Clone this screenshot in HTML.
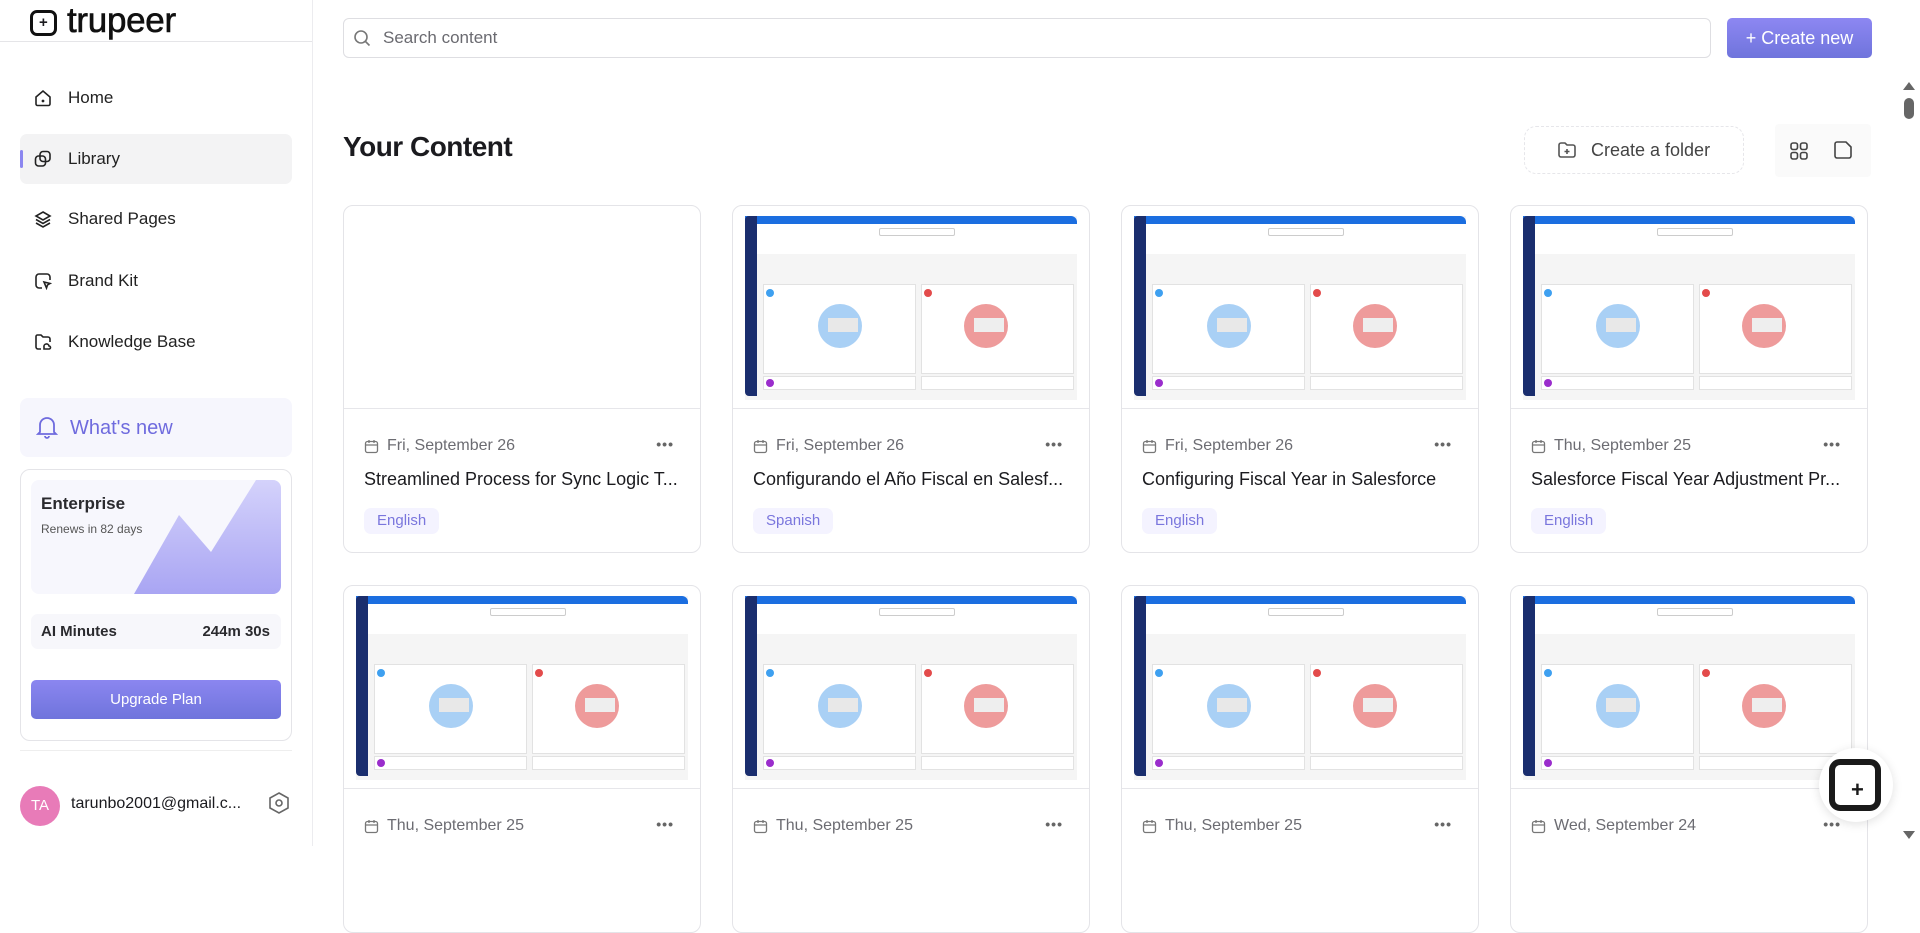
<!DOCTYPE html>
<html><head><meta charset="utf-8">
<style>
*{box-sizing:border-box;margin:0;padding:0}
body{width:1920px;height:846px;overflow:hidden;background:#fff;font-family:"Liberation Sans",sans-serif;color:#1b1b1f;position:relative}
.a{position:absolute}
.side{left:0;top:0;width:313px;height:846px;border-right:1px solid #ececef;background:#fff}
.nav{position:absolute;left:20px;width:272px;height:50px;display:flex;align-items:center;font-size:17px;color:#222}
.nav svg{margin-left:14px;margin-right:16px}
.card{position:absolute;width:358px;height:348px;border:1.5px solid #e4e4e8;border-radius:10px;overflow:hidden;background:#fff}
.thumb{position:absolute;left:0;top:0;right:0;height:203px;border-bottom:1.5px solid #e6e6ea}
.date{position:absolute;left:20px;top:231px;font-size:16px;color:#6c6c72;display:flex;align-items:center;gap:8px}
.dots{position:absolute;right:26px;top:230px;font-size:14px;color:#666;letter-spacing:1px;font-weight:bold}
.title{position:absolute;left:20px;top:263px;font-size:18px;color:#1b1b1f;white-space:nowrap}
.tag{position:absolute;left:20px;top:302px;height:26px;padding:0 13px;border-radius:7px;background:#f4f3ff;color:#7a76dd;font-size:15px;line-height:26px}
.sf{position:absolute;left:12px;top:10px;right:12px;bottom:8px;background:#f5f5f5;overflow:hidden}
.sf .top{position:absolute;left:0;right:0;top:0;height:8px;background:#1b6ee0;border-radius:0 6px 0 0}
.sf .left{position:absolute;left:0;top:0;bottom:4px;width:12px;background:#1a2e6e;border-radius:4px 0 0 4px}
.sf .hdr{position:absolute;left:12px;right:0;top:8px;height:30px;background:#fff}
.sf .srch{position:absolute;left:38%;top:4px;width:24%;height:8px;border:1px solid #ccc;border-radius:2px}
.sf .p{position:absolute;background:#fff;border:1px solid #e2e2e2}
.sf .c{position:absolute;border-radius:50%}
.sf .bar{position:absolute;background:#ddd}
</style></head><body>

<div class="a side">
  <div class="a" style="left:30px;top:10px;width:27px;height:26px;border:3.5px solid #111;border-radius:7px"></div>
  <div class="a" style="left:39px;top:14px;font-size:15px;font-weight:bold">+</div>
  <div class="a" style="left:67px;top:1px;font-size:35px;color:#111;letter-spacing:-0.3px;-webkit-text-stroke:0.6px #111">trupeer</div>
  <div class="a" style="left:0;top:41px;width:312px;height:1px;background:#e5e5e8"></div>

  <div class="nav" style="top:73px"><svg width="18" height="18" viewBox="0 0 18 18" fill="none" stroke="#222" stroke-width="1.6"><path d="M2 8L9 2l7 6v7a1.5 1.5 0 0 1-1.5 1.5h-11A1.5 1.5 0 0 1 2 15z"/><circle cx="9" cy="12" r=".6" fill="#222"/></svg>Home</div>
  <div class="nav" style="top:134px;background:#f3f3f4;border-radius:7px"><div class="a" style="left:0;top:16px;width:3px;height:18px;background:#8b86f0;border-radius:2px"></div><svg width="18" height="18" viewBox="0 0 18 18" fill="none" stroke="#222" stroke-width="1.6"><rect x="1.5" y="6" width="10" height="10" rx="3"/><rect x="6" y="1.5" width="10" height="10" rx="3"/></svg>Library</div>
  <div class="nav" style="top:194px"><svg width="18" height="18" viewBox="0 0 18 18" fill="none" stroke="#222" stroke-width="1.6"><path d="M9 2l7 4-7 4-7-4z"/><path d="M2 9.5l7 4 7-4"/><path d="M2 13l7 4 7-4"/></svg>Shared Pages</div>
  <div class="nav" style="top:256px"><svg width="18" height="18" viewBox="0 0 18 18" fill="none" stroke="#222" stroke-width="1.6"><path d="M8 16H5a3 3 0 0 1-3-3V5a3 3 0 0 1 3-3h8a3 3 0 0 1 3 3v3"/><path d="M10 10l6 1.5-2.5 1.5-1 3z"/></svg>Brand Kit</div>
  <div class="nav" style="top:317px"><svg width="18" height="18" viewBox="0 0 18 18" fill="none" stroke="#222" stroke-width="1.6"><path d="M7 16H4a2 2 0 0 1-2-2V3.5A1.5 1.5 0 0 1 3.5 2H7l2 2h5a2 2 0 0 1 2 2v3"/><path d="M10 16h5a1.5 1.5 0 0 0 0-3 2.5 2.5 0 0 0-5 1z"/></svg>Knowledge Base</div>

  <div class="a" style="left:20px;top:398px;width:272px;height:59px;background:#f6f6fd;border-radius:8px"></div>
  <svg class="a" style="left:36px;top:415px" width="22" height="24" viewBox="0 0 22 24" fill="none" stroke="#6f6bde" stroke-width="1.8"><path d="M4 17V10a7 7 0 0 1 14 0v7l2 2H2z"/><path d="M9 21a2 2 0 0 0 4 0"/></svg>
  <div class="a" style="left:70px;top:417px;font-size:20px;color:#6f6bde">What's new</div>

  <div class="a" style="left:20px;top:469px;width:272px;height:272px;border:1.5px solid #e4e4e8;border-radius:10px"></div>
  <div class="a" style="left:31px;top:480px;width:250px;height:114px;background:#f7f7fd;border-radius:8px;overflow:hidden">
    <svg class="a" style="left:0;top:0" width="250" height="114" viewBox="0 0 250 114"><defs><linearGradient id="g" x1="0" y1="0" x2="0" y2="1"><stop offset="0" stop-color="#d4d2fb"/><stop offset="1" stop-color="#a9a5f3"/></linearGradient></defs><path d="M103 114L148 35l32 37 45-72h25v114z" fill="url(#g)"/></svg>
    <div class="a" style="left:10px;top:14px;font-size:17px;font-weight:bold;color:#2a2a2e">Enterprise</div>
    <div class="a" style="left:10px;top:42px;font-size:12px;color:#555">Renews in 82 days</div>
  </div>
  <div class="a" style="left:31px;top:614px;width:250px;height:35px;background:#f7f7fb;border-radius:7px"></div>
  <div class="a" style="left:41px;top:623px;font-size:15px;font-weight:bold;color:#2a2a2e">AI Minutes</div>
  <div class="a" style="left:200px;top:623px;width:70px;text-align:right;font-size:15px;font-weight:bold;color:#2a2a2e">244m 30s</div>
  <div class="a" style="left:31px;top:680px;width:250px;height:39px;background:linear-gradient(#8b86f0,#6f74dc);border-radius:5px;color:#fff;font-size:15px;text-align:center;line-height:39px">Upgrade Plan</div>
  <div class="a" style="left:20px;top:750px;width:272px;height:1px;background:#eee"></div>

  <div class="a" style="left:20px;top:786px;width:40px;height:40px;border-radius:50%;background:#e87bb8;color:#fff;font-size:15px;text-align:center;line-height:40px">TA</div>
  <div class="a" style="left:71px;top:795px;font-size:16px;color:#1b1b1f">tarunbo2001@gmail.c...</div>
  <svg class="a" style="left:267px;top:791px" width="24" height="24" viewBox="0 0 24 24" fill="none" stroke="#666" stroke-width="1.6"><path d="M12 2l9 5v10l-9 5-9-5V7z"/><circle cx="12" cy="12" r="3"/></svg>
</div>

<div class="a" style="left:343px;top:18px;width:1368px;height:40px;border:1.5px solid #dedee2;border-radius:6px"></div>
<svg class="a" style="left:353px;top:29px" width="18" height="18" viewBox="0 0 18 18" fill="none" stroke="#777" stroke-width="1.6"><circle cx="8" cy="8" r="6"/><path d="M12.5 12.5l4 4"/></svg>
<div class="a" style="left:383px;top:28px;font-size:17px;color:#6a6a70">Search content</div>
<div class="a" style="left:1727px;top:18px;width:145px;height:40px;background:linear-gradient(#8d87f2,#6f74dc);border-radius:5px;color:#fff;font-size:18px;line-height:40px;text-align:center">+ Create new</div>

<div class="a" style="left:1903px;top:82px;width:0;height:0;border-left:6px solid transparent;border-right:6px solid transparent;border-bottom:8px solid #666"></div>
<div class="a" style="left:1904px;top:98px;width:10px;height:21px;background:#666;border-radius:5px"></div>
<div class="a" style="left:1903px;top:831px;width:0;height:0;border-left:6px solid transparent;border-right:6px solid transparent;border-top:8px solid #666"></div>

<div class="a" style="left:343px;top:131px;font-size:28px;font-weight:bold;color:#1b1b1f;letter-spacing:-0.5px">Your Content</div>
<div class="a" style="left:1524px;top:126px;width:220px;height:48px;border:1px dashed #e6e6ea;border-radius:12px"></div>
<svg class="a" style="left:1557px;top:140px" width="20" height="20" viewBox="0 0 20 20" fill="none" stroke="#555" stroke-width="1.6"><path d="M2 5a2 2 0 0 1 2-2h4l2 2h6a2 2 0 0 1 2 2v8a2 2 0 0 1-2 2H4a2 2 0 0 1-2-2z"/><path d="M10 9v5M7.5 11.5h5"/></svg>
<div class="a" style="left:1591px;top:140px;font-size:18px;color:#444">Create a folder</div>
<div class="a" style="left:1775px;top:124px;width:96px;height:53px;background:#fafafa;border-radius:4px"></div>
<svg class="a" style="left:1789px;top:141px" width="20" height="20" viewBox="0 0 20 20" fill="none" stroke="#444" stroke-width="1.6"><rect x="2" y="2" width="6.5" height="6.5" rx="2"/><rect x="11.5" y="2" width="6.5" height="6.5" rx="2"/><rect x="2" y="11.5" width="6.5" height="6.5" rx="2"/><rect x="11.5" y="11.5" width="6.5" height="6.5" rx="2"/></svg>
<svg class="a" style="left:1833px;top:140px" width="20" height="20" viewBox="0 0 20 20" fill="none" stroke="#444" stroke-width="1.6"><path d="M4 2h9l5 5v9a2 2 0 0 1-2 2H4a2 2 0 0 1-2-2V4a2 2 0 0 1 2-2z"/></svg>

<div id="cards"></div>
<div class="card" style="left:343px;top:205px"><div class="thumb"></div><div class="date"><svg width="15" height="15" viewBox="0 0 15 15" fill="none" stroke="#777" stroke-width="1.3"><rect x="1.5" y="2.5" width="12" height="11" rx="2"/><path d="M1.5 6h12M5 1v3M10 1v3"/></svg>Fri, September 26</div><div class="dots">•••</div><div class="title">Streamlined Process for Sync Logic T...</div><div class="tag">English</div></div>

<script>
const thumb=`<div class="sf"><div class="top"></div><div class="hdr"><div class="srch"></div></div><div class="left"></div>
<div class="p" style="left:18px;top:68px;width:46%;height:90px"></div>
<div class="p" style="left:calc(20px + 47%);top:68px;width:46%;height:90px"></div>
<div class="c" style="left:22%;top:88px;width:44px;height:44px;background:#a9d0f5"></div>
<div class="c" style="left:66%;top:88px;width:44px;height:44px;background:#ee9b9b"></div>
<div class="bar" style="left:calc(22% + 10px);top:102px;width:30px;height:14px;background:#e8e8e8"></div>
<div class="bar" style="left:calc(66% + 10px);top:102px;width:30px;height:14px;background:#eee"></div>
<div class="c" style="left:21px;top:73px;width:8px;height:8px;background:#3ea0f0"></div>
<div class="c" style="left:calc(23px + 47%);top:73px;width:8px;height:8px;background:#e34b4b"></div>
<div class="p" style="left:18px;top:160px;width:46%;height:14px"></div>
<div class="p" style="left:calc(20px + 47%);top:160px;width:46%;height:14px"></div>
<div class="c" style="left:21px;top:163px;width:8px;height:8px;background:#9a2dcc"></div>
</div>`;
const cal=`<svg width="15" height="15" viewBox="0 0 15 15" fill="none" stroke="#777" stroke-width="1.3"><rect x="1.5" y="2.5" width="12" height="11" rx="2"/><path d="M1.5 6h12M5 1v3M10 1v3"/></svg>`;
const data=[[1,0,"Fri, September 26","Configurando el Año Fiscal en Salesf...","Spanish"],
[2,0,"Fri, September 26","Configuring Fiscal Year in Salesforce","English"],
[3,0,"Thu, September 25","Salesforce Fiscal Year Adjustment Pr...","English"],
[0,1,"Thu, September 25","",""],[1,1,"Thu, September 25","",""],[2,1,"Thu, September 25","",""],[3,1,"Wed, September 24","",""]];
const xs=[343,732,1121,1510],ys=[205,585];let h="";
for(const d of data){h+=`<div class="card" style="left:${xs[d[0]]}px;top:${ys[d[1]]}px"><div class="thumb">${thumb}</div><div class="date">${cal}${d[2]}</div><div class="dots">•••</div>${d[3]?`<div class="title">${d[3]}</div><div class="tag">${d[4]}</div>`:""}</div>`;}
document.getElementById("cards").innerHTML=h;
</script>

<div class="a" style="left:1819px;top:748px;width:74px;height:74px;border-radius:50%;background:#fff;box-shadow:0 2px 10px rgba(0,0,0,.12)"></div>
<div class="a" style="left:1829px;top:759px;width:52px;height:52px;border:6px solid #1a1a1a;border-radius:11px"></div>
<div class="a" style="left:1851px;top:777px;font-size:22px;font-weight:bold;color:#1a1a1a">+</div>
</body></html>
